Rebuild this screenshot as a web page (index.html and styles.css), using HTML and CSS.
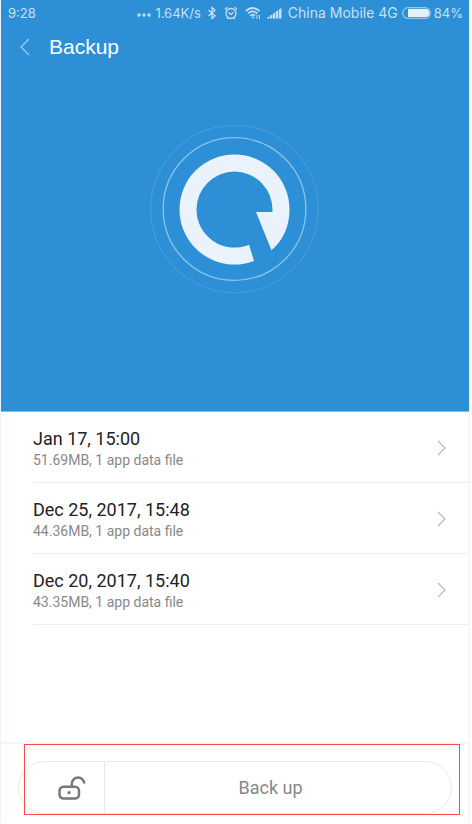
FILE: index.html
```html
<!DOCTYPE html>
<html lang="en">
<head>
<meta charset="utf-8">
<meta name="viewport" content="width=device-width, initial-scale=1">
<title>Backup</title>
<link rel="stylesheet" href="styles.css">
</head>
<body>
<div class="screen">
  <header class="hero">
    <div class="status">
      <span class="time">9:28</span>
      <svg class="dots" width="14" height="14" viewBox="0 0 14 14" fill="currentColor"><circle cx="2" cy="9" r="1.7"/><circle cx="7" cy="9" r="1.7"/><circle cx="12" cy="9" r="1.7"/></svg>
      <span>1.64K/s</span>
      <svg class="bluetooth" width="10" height="14" viewBox="0 0 10 14" fill="none" stroke="currentColor" stroke-width="1.3"><path d="M1.500 4 8 9.800 5 12.500V1.500L8 4.200 1.500 10"/></svg>
      <svg class="alarm" width="14" height="14" viewBox="0 0 14 14" fill="none" stroke="currentColor" stroke-width="1.3"><circle cx="7" cy="7.500" r="5"/><path d="M4.500 6.500 7 8.500 9.500 6.500M1 3.500 3.500 1.200M13 3.500 10.500 1.200M3 12.800l1-1M11 12.800l-1-1"/></svg>
      <svg class="wifi" width="16" height="14" viewBox="0 0 16 14" fill="none" stroke="currentColor" stroke-width="1.7"><path d="M.8 5Q7.500-1 14.500 5M3 7.500Q7.500 3.300 12.300 7.500M5.200 9.800Q7.500 7.500 10 9.500"/><path d="M7 11h2l-1 1.500z" fill="currentColor" stroke-width=".6"/><path d="M12 9v4M14.500 9v4" stroke-width="1"/></svg>
      <svg class="signal" width="15" height="14" viewBox="0 0 15 14" fill="currentColor"><path d="M0 12.500h2.300v-2L0 11.500zM2.900 12.500h2.300V8.500l-2.300 1.300zM5.800 12.500h2.300V6.500L5.800 8zM8.700 12.500H11V4.300L8.700 6zM11.700 12.500h2.800V2l-2.800 1.800z"/></svg>
      <span class="carrier">China Mobile 4G</span>
      <svg class="battery" width="29" height="12" viewBox="0 0 29 12"><rect x=".6" y=".6" width="27.800" height="10.800" rx="5.400" fill="none" stroke="currentColor" stroke-opacity=".7" stroke-width="1.200"/><path d="M6 2h17.500a4 4 0 0 1 0 8H6z" fill="#e4f1fa"/></svg>
      <span>84%</span>
    </div>
    <nav class="titlebar">
      <button class="back" type="button" aria-label="Back"><svg width="10" height="18" viewBox="0 0 10 18" fill="none" stroke="currentColor" stroke-width="1.200"><path d="M9 1 1 9l8 8"/></svg></button>
      <h1>Backup</h1>
    </nav>
    <svg class="emblem" width="170" height="170" viewBox="0 0 170 170">
      <circle cx="84.500" cy="84" r="83.800" fill="none" stroke="#fff" stroke-opacity=".13"/>
      <circle cx="84.500" cy="84" r="71.300" fill="none" stroke="#fff" stroke-opacity=".45" stroke-width="1.300"/>
      <path fill="#eaf3fb" d="M104 136A55 55 0 0 1 29.500 84.500 55 55 0 0 1 84.500 29.500 55 55 0 0 1 139.500 84.500 55 55 0 0 1 121.500 125.300L106 87H122.400A38 38 0 0 0 122.500 84.500 38 38 0 0 0 84.500 46.500 38 38 0 0 0 46.500 84.500 38 38 0 0 0 99.100 119.700Z"/>
    </svg>
  </header>
  <main>
    <ul class="backups">
      <li><a href="#jan-17"><span><strong>Jan 17, 15:00</strong><small>51.69MB, 1 app data file</small></span><svg width="10" height="16" viewBox="0 0 10 16"><path d="m1 1 7 7-7 7"/></svg></a></li>
      <li><a href="#dec-25"><span><strong>Dec 25, 2017, 15:48</strong><small>44.36MB, 1 app data file</small></span><svg width="10" height="16" viewBox="0 0 10 16"><path d="m1 1 7 7-7 7"/></svg></a></li>
      <li><a href="#dec-20"><span><strong>Dec 20, 2017, 15:40</strong><small>43.35MB, 1 app data file</small></span><svg width="10" height="16" viewBox="0 0 10 16"><path d="m1 1 7 7-7 7"/></svg></a></li>
    </ul>
  </main>
  <footer class="actions">
    <div class="pill">
      <button class="lock" type="button" aria-label="Encryption"><svg width="28" height="24" viewBox="0 0 28 24" fill="none" stroke="#777" stroke-width="2.500"><rect x="1.500" y="10.800" width="19.500" height="11.700" rx="4"/><path d="M13.800 11V8a6.200 6.200 0 0 1 12.400-.5"/><circle cx="11" cy="16.700" r="1.600" fill="#777" stroke="none"/></svg></button>
      <button class="run" type="button">Back up</button>
    </div>
    <div class="highlight"></div>
  </footer>
</div>
</body>
</html>
```
FILE: styles.css
```css
* { box-sizing: border-box; }

body {
  margin: 0;
  background: #fff;
  font-family: Roboto, "Liberation Sans", sans-serif;
}

button {
  padding: 0;
  border: 0;
  background: none;
  color: inherit;
  font: inherit;
}

svg { display: block; flex: none; }

.screen {
  display: flex;
  flex-direction: column;
  min-height: calc(100vh - 2px);
  margin: 0 2px 2px 0;
  border-left: 1px solid #edf2fc;
  border-right: 1px solid #f2f3f6;
}

.hero {
  height: 412px;
  background: #2d90d6;
  border-bottom: 1px solid #81bce7;
  color: #fff;
}

.status {
  display: flex;
  align-items: center;
  height: 26px;
  padding: 0 6px 0 7px;
  color: #c5e0f4;
  font: 13px/26px Inter, sans-serif;
  white-space: nowrap;
}

.time { margin-right: auto; }
.carrier { font-size: 14px; }
.dots { margin-right: 4px; }
.bluetooth { margin: 0 7px 0 6px; }
.wifi { margin: 0 6px 0 7px; }
.signal { margin-right: 6px; }
.battery { margin: 0 3px 0 4px; }

.titlebar {
  display: flex;
  align-items: center;
  gap: 19px;
  height: 42px;
  padding-left: 19px;
}

.back { color: #9fcdee; }

h1 {
  margin: 0;
  font: 21px/24px "Liberation Sans", sans-serif;
}

.emblem { margin: 57px auto 0; }

.backups {
  margin: 0;
  padding: 0 0 0 32px;
  list-style: none;
}

.backups li { border-bottom: 1px solid #eee; }

.backups a {
  display: flex;
  align-items: center;
  justify-content: space-between;
  height: 70px;
  padding: 1px 22px 0 0;
  color: #222;
  text-decoration: none;
}

.backups strong,
.backups small { display: block; }

.backups strong {
  font-size: 18px;
  font-weight: 400;
  line-height: 24px;
}

.backups small {
  color: #888;
  font-size: 14px;
  line-height: 18px;
}

.backups path {
  fill: none;
  stroke: #bbb;
  stroke-width: 1.3;
}

.actions {
  position: relative;
  margin-top: auto;
  padding: 17px 17px 8px;
  border-top: 2px solid #f5f5f5;
}

.pill {
  display: flex;
  height: 53px;
  border: 1px solid #e8e8e8;
  border-radius: 27px;
}

.lock {
  display: flex;
  align-items: center;
  justify-content: center;
  width: 86px;
  padding-left: 20px;
  border-right: 1px solid #e8e8e8;
}

.run {
  flex: 1;
  padding-right: 15px;
  color: #888;
  font-size: 18px;
}

.highlight {
  position: absolute;
  inset: 0 9px 7px 23px;
  border: 1px solid #fb4a4a;
  pointer-events: none;
}
```
